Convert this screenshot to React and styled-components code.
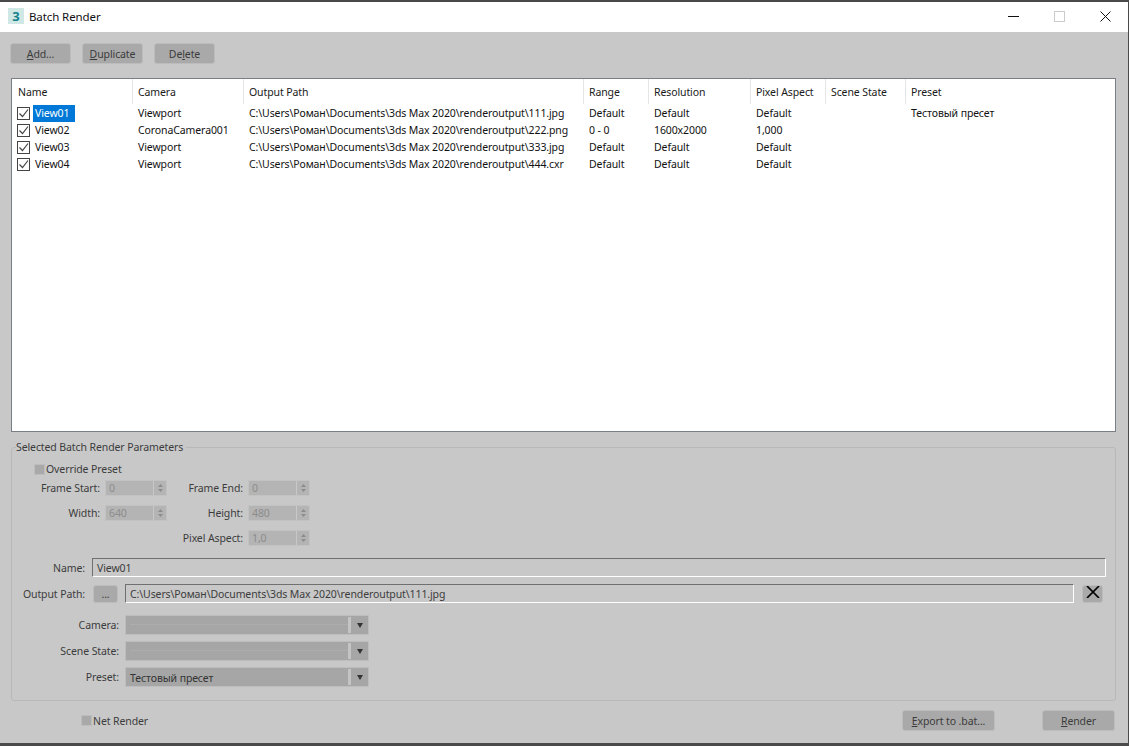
import React from "react";
import styled, { createGlobalStyle } from "styled-components";

const GlobalStyle = createGlobalStyle`
  html, body {
    margin: 0;
    padding: 0;
    background: #4a4a4a;
  }
  body {
    font-family: "Noto Sans", "Liberation Sans", sans-serif;
    font-size: 10.5px;
    letter-spacing: -0.1px;
    color: #1a1a1a;
  }
`;

const columns = "121px 111px 340px 65px 102px 75px 80px 134px 1fr";

const jobs = [
  { name: "View01", camera: "Viewport", path: "C:\\Users\\Роман\\Documents\\3ds Max 2020\\renderoutput\\111.jpg", range: "Default", res: "Default", aspect: "Default", state: "", preset: "Тестовый пресет", selected: true },
  { name: "View02", camera: "CoronaCamera001", path: "C:\\Users\\Роман\\Documents\\3ds Max 2020\\renderoutput\\222.png", range: "0 - 0", res: "1600x2000", aspect: "1,000", state: "", preset: "" },
  { name: "View03", camera: "Viewport", path: "C:\\Users\\Роман\\Documents\\3ds Max 2020\\renderoutput\\333.jpg", range: "Default", res: "Default", aspect: "Default", state: "", preset: "" },
  { name: "View04", camera: "Viewport", path: "C:\\Users\\Роман\\Documents\\3ds Max 2020\\renderoutput\\444.cxr", range: "Default", res: "Default", aspect: "Default", state: "", preset: "" },
];

const headers = ["Name", "Camera", "Output Path", "Range", "Resolution", "Pixel Aspect", "Scene State", "Preset"];

const Win = styled.div`
  width: 1128px;
  height: 741px;
  margin-top: 2px;
  background: #c8c8c8;
  display: flex;
  flex-direction: column;
`;
const TitleBar = styled.div`
  height: 30px;
  box-sizing: border-box;
  padding: 0 0 2px 8px;
  flex: none;
  background: #fff;
  display: flex;
  align-items: center;
  font-size: 11.5px;
  color: #111;
`;
const AppIcon = styled.span`
  width: 16px;
  height: 16px;
  background: #cfe8e5;
  color: #14808a;
  font-weight: 700;
  font-size: 13px;
  line-height: 16px;
  text-align: center;
  margin-right: 5px;
`;
const Caption = styled.span`
  flex: 1;
`;
const WinButton = styled.span`
  width: 46px;
  height: 28px;
  display: flex;
  align-items: center;
  justify-content: center;
`;
const Toolbar = styled.div`
  display: flex;
  gap: 11px;
  padding: 11px 10px 14px;
`;
const Button = styled.button`
  width: ${(p) => p.$w || 61}px;
  height: ${(p) => p.$h || 21}px;
  margin-left: ${(p) => p.$left || 0}px;
  padding: 0;
  background: #a9a9a9;
  border: 1px solid #bcbcbc;
  border-radius: 3px;
  font: inherit;
  letter-spacing: inherit;
  color: #3c3c3c;
  u { text-underline-offset: 1px; }
`;
const List = styled.div`
  margin: 0 12px 0 11px;
  height: 354px;
  flex: none;
  background: #fff;
  border: 1px solid #7a7f85;
  box-sizing: border-box;
`;
const HeaderRow = styled.div`
  display: grid;
  grid-template-columns: ${columns};
  height: 25px;
  margin-bottom: 1px;
`;
const HeaderCell = styled.div`
  padding: 1px 0 0 5px;
  line-height: 24px;
  border-right: 1px solid #e5e5e5;
  white-space: nowrap;
  &:first-child { padding-left: 6px; }
  &:last-child { border-right: 0; }
`;
const Row = styled.div`
  display: grid;
  grid-template-columns: ${columns};
  height: 17px;
  line-height: 17px;
  color: #111;
`;
const Cell = styled.div`
  padding-left: 5px;
  white-space: nowrap;
`;
const NameCell = styled.div`
  display: flex;
  align-items: center;
  padding-left: 5px;
`;
const CheckBox = styled.span`
  width: 13px;
  height: 13px;
  box-sizing: border-box;
  border: 1px solid #444;
  margin-right: 3px;
  display: flex;
  align-items: center;
  justify-content: center;
`;
const NameText = styled.span`
  padding: 0 4px 0 2px;
  width: 36px;
  background: ${(p) => (p.$selected ? "#0078d7" : "transparent")};
  color: ${(p) => (p.$selected ? "#fff" : "#111")};
`;
const Group = styled.fieldset`
  margin: 8px 12px 0 11px;
  padding: 8px 0 0;
  height: 261px;
  box-sizing: border-box;
  flex: none;
  border: 1px solid #b8b8b8;
  border-radius: 3px;
  color: #3c3c3c;
`;
const Legend = styled.legend`
  padding: 0;
  margin-left: 4px;
  padding-right: 3px;
  line-height: 14px;
`;
const Check = styled.label`
  display: flex;
  align-items: center;
  gap: 1px;
  height: 14px;
  padding-left: ${(p) => p.$left}px;
  color: #3c3c3c;
`;
const GreyBox = styled.span`
  width: 11px;
  height: 11px;
  background: #a9a9a9;
  border: 1px solid #bdbdbd;
  box-sizing: border-box;
`;
const SpinGrid = styled.div`
  display: grid;
  grid-template-columns: 88px 62px 71px 62px;
  column-gap: 5px;
  grid-auto-rows: 16px;
  row-gap: 9px;
  margin-top: 4px;
`;
const SpinLabel = styled.span`
  text-align: right;
  line-height: 16px;
  white-space: nowrap;
  grid-column: ${(p) => p.$col || "auto"};
`;
const Spin = styled.div`
  display: flex;
  background: #b4b4b4;
  border: 1px solid #c2c2c2;
  box-sizing: border-box;
  color: #8c8c8c;
  line-height: 14px;
  padding-left: 3px;
  grid-column: ${(p) => p.$col || "auto"};
`;
const SpinValue = styled.span`
  flex: 1;
`;
const SpinArrows = styled.span`
  width: 12px;
  border-left: 1px solid #c8c8c8;
  display: flex;
  align-items: center;
  justify-content: center;
`;
const FormRow = styled.div`
  display: flex;
  align-items: center;
  height: ${(p) => p.$h}px;
  margin-top: ${(p) => p.$top}px;
`;
const FormLabel = styled.span`
  width: ${(p) => p.$w}px;
  text-align: right;
  flex: none;
  white-space: nowrap;
`;
const TextField = styled.div`
  height: 100%;
  box-sizing: border-box;
  width: ${(p) => p.$w}px;
  margin-left: ${(p) => p.$left}px;
  border: 1px solid;
  border-color: #707070 #fff #fff #707070;
  line-height: 19px;
  padding-left: 4px;
  color: #3c3c3c;
`;
const Combo = styled.div`
  width: 244px;
  height: 20px;
  margin-left: 6px;
  box-sizing: border-box;
  background: #a6a6a6;
  border: 1px solid #bdbdbd;
  display: flex;
  align-items: center;
  padding-left: 4px;
  color: #333;
`;
const ComboText = styled.span`
  flex: 1;
  height: 100%;
  line-height: 20px;
  background: ${(p) =>
    p.$empty ? "linear-gradient(transparent 8px, #adadad 8px, #adadad 9px, transparent 9px)" : "none"};
`;
const ComboArrow = styled.span`
  width: 20px;
  height: 16px;
  box-sizing: border-box;
  border-left: 3px solid #c4c4c4;
  display: flex;
  align-items: center;
  justify-content: center;
`;
const Footer = styled.div`
  display: flex;
  align-items: center;
  padding: 9px 13px 0 81px;
`;
const Spacer = styled.span`
  flex: 1;
`;

const Arrows = () => (
  <svg width="7" height="10" viewBox="0 0 7 10">
    <path d="M3.5 1 6 4H1zM3.5 9 1 6h5z" fill="#8c8c8c" />
  </svg>
);

const Caret = () => (
  <svg width="6" height="5" viewBox="0 0 6 5">
    <path d="M0 0h6L3 5z" fill="#333" />
  </svg>
);

export default function App() {
  return (
    <>
      <GlobalStyle />
      <Win>
        <TitleBar>
          <AppIcon>3</AppIcon>
          <Caption>Batch Render</Caption>
          <WinButton>
            <svg width="11" height="11" viewBox="0 0 11 11"><path d="M0 5.5h11" stroke="#111" /></svg>
          </WinButton>
          <WinButton>
            <svg width="11" height="11" viewBox="0 0 11 11"><rect x=".5" y=".5" width="10" height="10" fill="none" stroke="#ccc" /></svg>
          </WinButton>
          <WinButton>
            <svg width="11" height="11" viewBox="0 0 11 11"><path d="M.5.5l10 10M10.5.5l-10 10" stroke="#111" /></svg>
          </WinButton>
        </TitleBar>
        <Toolbar>
          <Button><u>A</u>dd...</Button>
          <Button><u>D</u>uplicate</Button>
          <Button>De<u>l</u>ete</Button>
        </Toolbar>
        <List>
          <HeaderRow>
            {headers.map((h) => (
              <HeaderCell key={h}>{h}</HeaderCell>
            ))}
          </HeaderRow>
          {jobs.map((job) => (
            <Row key={job.name}>
              <NameCell>
                <CheckBox>
                  <svg width="11" height="11" viewBox="0 0 11 11">
                    <path d="M1.5 5.5l3 3 5.5-7" fill="none" stroke="#444" strokeWidth="1.2" />
                  </svg>
                </CheckBox>
                <NameText $selected={job.selected}>{job.name}</NameText>
              </NameCell>
              <Cell>{job.camera}</Cell>
              <Cell>{job.path}</Cell>
              <Cell>{job.range}</Cell>
              <Cell>{job.res}</Cell>
              <Cell>{job.aspect}</Cell>
              <Cell>{job.state}</Cell>
              <Cell>{job.preset}</Cell>
            </Row>
          ))}
        </List>
        <Group>
          <Legend>Selected Batch Render Parameters</Legend>
          <Check $left={22}><GreyBox />Override Preset</Check>
          <SpinGrid>
            <SpinLabel>Frame Start:</SpinLabel>
            <Spin><SpinValue>0</SpinValue><SpinArrows><Arrows /></SpinArrows></Spin>
            <SpinLabel>Frame End:</SpinLabel>
            <Spin><SpinValue>0</SpinValue><SpinArrows><Arrows /></SpinArrows></Spin>
            <SpinLabel>Width:</SpinLabel>
            <Spin><SpinValue>640</SpinValue><SpinArrows><Arrows /></SpinArrows></Spin>
            <SpinLabel>Height:</SpinLabel>
            <Spin><SpinValue>480</SpinValue><SpinArrows><Arrows /></SpinArrows></Spin>
            <SpinLabel $col="3">Pixel Aspect:</SpinLabel>
            <Spin $col="4"><SpinValue>1,0</SpinValue><SpinArrows><Arrows /></SpinArrows></Spin>
          </SpinGrid>
          <FormRow $h={19} $top={12}>
            <FormLabel $w={73}>Name:</FormLabel>
            <TextField $left={7} $w={1014}>View01</TextField>
          </FormRow>
          <FormRow $h={19} $top={7}>
            <FormLabel $w={73}>Output Path:</FormLabel>
            <Button $w={25} $h={18} $left={8}>...</Button>
            <TextField $left={7} $w={949}>C:\Users\Роман\Documents\3ds Max 2020\renderoutput\111.jpg</TextField>
            <Button $w={21} $h={18} $left={8}>
              <svg width="14" height="12" viewBox="0 0 14 12">
                <path d="M1 0l12 12M13 0L1 12" stroke="#000" strokeWidth="1.7" />
              </svg>
            </Button>
          </FormRow>
          <FormRow $h={20} $top={12}>
            <FormLabel $w={107}>Camera:</FormLabel>
            <Combo><ComboText $empty /><ComboArrow><Caret /></ComboArrow></Combo>
          </FormRow>
          <FormRow $h={20} $top={6}>
            <FormLabel $w={107}>Scene State:</FormLabel>
            <Combo><ComboText $empty /><ComboArrow><Caret /></ComboArrow></Combo>
          </FormRow>
          <FormRow $h={20} $top={6}>
            <FormLabel $w={107}>Preset:</FormLabel>
            <Combo><ComboText>Тестовый пресет</ComboText><ComboArrow><Caret /></ComboArrow></Combo>
          </FormRow>
        </Group>
        <Footer>
          <Check $left={0}><GreyBox />Net Render</Check>
          <Spacer />
          <Button $w={93}><u>E</u>xport to .bat...</Button>
          <Button $w={73} $left={47}><u>R</u>ender</Button>
        </Footer>
      </Win>
    </>
  );
}
